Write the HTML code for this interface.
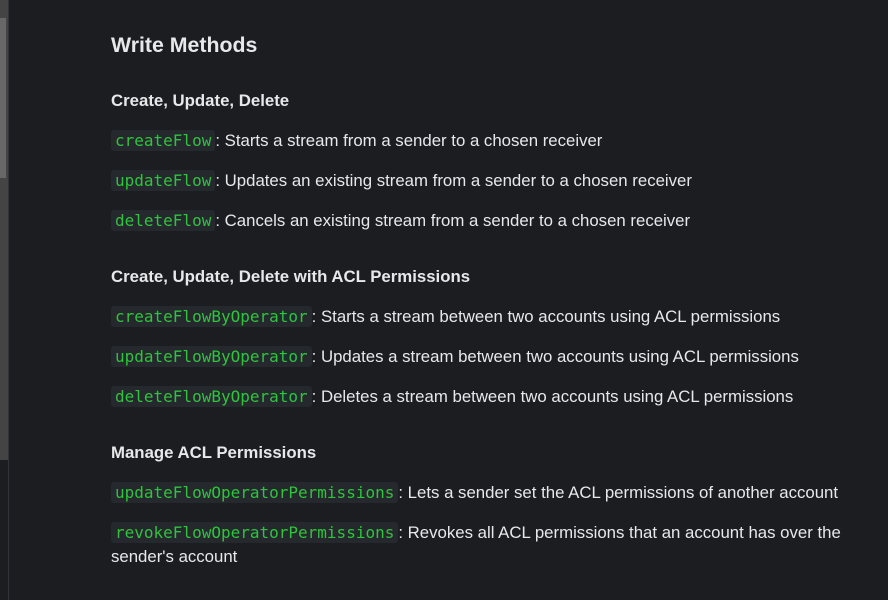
<!DOCTYPE html>
<html><head><style>
body{margin:0;width:888px;height:600px;background:#1b1d21;overflow:hidden;position:relative;font-family:"Liberation Sans","DejaVu Sans",sans-serif;color:#e6e8ea}
.track{position:absolute;left:0;top:0;width:8px;height:460px;background:#444}
.thumb{position:absolute;left:0;top:18px;width:6px;height:160px;background:#686868}
.line{position:absolute;left:8px;top:0;width:1px;height:600px;background:#30333a}
.t{position:absolute;left:111px;font-size:16.8px;line-height:24px;white-space:nowrap}
h1{position:absolute;left:111px;top:31px;margin:0;font-size:21.3px;font-weight:bold;line-height:28px}
code{font-family:"DejaVu Sans Mono",monospace;font-size:16px;color:#2ec43c;background:#25282d;border-radius:3px;padding:1px 4px}
.b{font-weight:bold;font-size:16.8px}
</style></head><body>
<div class="track"></div><div class="thumb"></div><div class="line"></div>
<h1>Write Methods</h1>
<div class="t b" style="top:89px">Create, Update, Delete</div>
<div class="t" style="top:129px"><code>createFlow</code>: Starts a stream from a sender to a chosen receiver</div>
<div class="t" style="top:169px"><code>updateFlow</code>: Updates an existing stream from a sender to a chosen receiver</div>
<div class="t" style="top:209px"><code>deleteFlow</code>: Cancels an existing stream from a sender to a chosen receiver</div>
<div class="t b" style="top:265px">Create, Update, Delete with ACL Permissions</div>
<div class="t" style="top:305px"><code>createFlowByOperator</code>: Starts a stream between two accounts using ACL permissions</div>
<div class="t" style="top:345px"><code>updateFlowByOperator</code>: Updates a stream between two accounts using ACL permissions</div>
<div class="t" style="top:385px"><code>deleteFlowByOperator</code>: Deletes a stream between two accounts using ACL permissions</div>
<div class="t b" style="top:441px">Manage ACL Permissions</div>
<div class="t" style="top:481px"><code>updateFlowOperatorPermissions</code>: Lets a sender set the ACL permissions of another account</div>
<div class="t" style="top:521px"><code>revokeFlowOperatorPermissions</code>: Revokes all ACL permissions that an account has over the<br>sender's account</div>
</body></html>
